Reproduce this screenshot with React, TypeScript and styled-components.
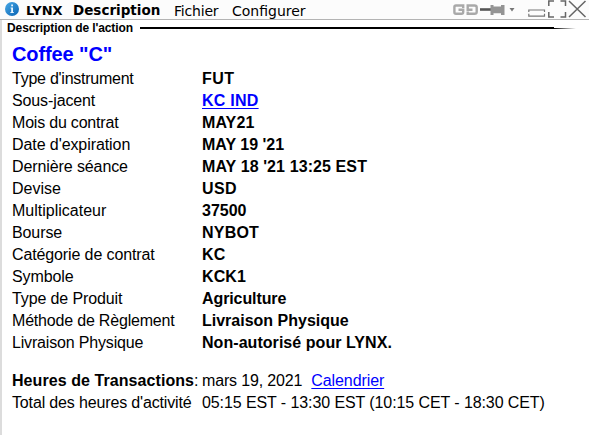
import React from 'react';
import styled, { createGlobalStyle } from 'styled-components';

const Global = createGlobalStyle`
  * { box-sizing: border-box; }
  body { margin: 0; background: #fff; overflow: hidden; }
`;

const Window = styled.main`
  width: 589px;
  height: 435px;
  display: flex;
  flex-direction: column;
  background: #fff;
  color: #000;
  font: 16px/22px "Liberation Sans", Arial, sans-serif;
  white-space: nowrap;
`;

const TitleBar = styled.header`
  height: 20px;
  flex: none;
  display: flex;
  align-items: flex-start;
  padding-left: 4px;
  background: #fcfcfc;
  border-bottom: 1px solid #b4b4b4;
  svg { display: block; flex: none; }
`;

const BarText = styled.span<{ $width: number; $size: number; $bold?: boolean; $gap?: number; $track?: number }>`
  width: ${p => p.$width}px;
  margin-left: ${p => p.$gap ?? 0}px;
  font: ${p => (p.$bold ? 700 : 400)} ${p => p.$size}px/${p => (p.$bold ? 21 : 23)}px "DejaVu Sans", Verdana, sans-serif;
  letter-spacing: ${p => p.$track ?? 0}px;
`;

const Controls = styled.div`
  margin-left: auto;
`;

const Body = styled.section`
  flex: 1;
  border-left: 2px solid #dcdcdc;
`;

const SectionHead = styled.div`
  height: 16px;
  display: flex;
  align-items: center;
  padding-left: 5px;
`;

const SectionTitle = styled.h2`
  width: 133px;
  margin: 0;
  font-size: 12px;
  line-height: 16px;
  font-weight: 700;
  letter-spacing: -0.1px;
`;

const Rule = styled.div`
  width: 414px;
  height: 2px;
  background: #000;
`;

const RuleTail = styled.div`
  width: 22px;
  height: 1px;
  margin-top: 1px;
  background: linear-gradient(90deg, #000, #fff);
`;

const Product = styled.h1`
  margin: 6px 0 0 10px;
  height: 26px;
  font-size: 20px;
  line-height: 25px;
  letter-spacing: -0.1px;
  color: #00f;
`;

const Grid = styled.dl`
  margin: 0 0 0 10px;
  display: grid;
  grid-template-columns: 190px 1fr;
  grid-auto-rows: 22px;
`;

const Label = styled.dt<{ $track?: number }>`
  letter-spacing: ${p => p.$track ?? 0}px;
`;

const Value = styled.dd<{ $bold?: boolean; $track?: number }>`
  margin: 0;
  font-weight: ${p => (p.$bold ? 700 : 400)};
  letter-spacing: ${p => p.$track ?? 0}px;
`;

const Hours = styled(Grid)`
  margin-top: 16px;
`;

const Link = styled.a`
  color: #00f;
  text-decoration: underline;
  text-underline-offset: 2px;
  text-decoration-thickness: 1px;
`;

const CalendarLink = styled(Link)`
  margin-left: 9px;
  letter-spacing: -0.1px;
`;

const rows: { label: string; value: string; link?: boolean; lt?: number; vt?: number }[] = [
  { label: "Type d'instrument", value: 'FUT', lt: -0.25, vt: 0.5 },
  { label: 'Sous-jacent', value: 'KC IND', link: true, lt: -0.12, vt: 0.25 },
  { label: 'Mois du contrat', value: 'MAY21', lt: -0.2, vt: 0.1 },
  { label: "Date d'expiration", value: "MAY 19 '21", lt: -0.08 },
  { label: 'Dernière séance', value: "MAY 18 '21 13:25 EST", lt: -0.1, vt: 0.1 },
  { label: 'Devise', value: 'USD', vt: 0.4 },
  { label: 'Multiplicateur', value: '37500' },
  { label: 'Bourse', value: 'NYBOT', lt: -0.1, vt: 0.2 },
  { label: 'Catégorie de contrat', value: 'KC', lt: -0.12, vt: 0.2 },
  { label: 'Symbole', value: 'KCK1', lt: -0.1, vt: 0.1 },
  { label: 'Type de Produit', value: 'Agriculture', lt: -0.12, vt: -0.1 },
  { label: 'Méthode de Règlement', value: 'Livraison Physique', lt: -0.19 },
  { label: 'Livraison Physique', value: 'Non-autorisé pour LYNX.', lt: -0.17, vt: 0.05 },
];

const InfoIcon = () => (
  <svg width="16" height="18" viewBox="0 0 16 18">
    <defs>
      <linearGradient id="info" x1="0" y1="0" x2="1" y2="1">
        <stop offset="0" stopColor="#49a9e6" />
        <stop offset="1" stopColor="#0863b4" />
      </linearGradient>
    </defs>
    <circle cx="8" cy="9" r="7" fill="url(#info)" />
    <rect x="7.2" y="4.5" width="1.8" height="1.8" fill="#e8f5ff" />
    <path d="M6.6 7.5H9V12h.8v1H6.4V12H7.2V8.5h-.6z" fill="#e8f5ff" />
  </svg>
);

const WindowIcons = () => (
  <svg width="136" height="19" viewBox="453 0 136 19" fill="none">
    <g stroke="#a9a9a9" strokeWidth="2.4">
      <path d="M463.2 8V5.5H456Q454.4 5.5 454.4 7V12.3Q454.4 13.8 456 13.8H461.5Q463.2 13.8 463.2 12V9.7H458.5" />
      <path d="M467.7 11.5V13.8H474.5Q476.7 13.8 476.7 12V7.3Q476.7 5.5 474.5 5.5H467.7V9.7H472.5" />
    </g>
    <path d="M480 9.5H491" stroke="#555" strokeWidth="2.6" />
    <path d="M490.5 5H493.5V6.5H501V5H504.5V15H501V13.2H493.5V15H490.5Z" fill="#949494" />
    <path d="M509.5 8H514.5L512 11.5Z" fill="#777" />
    <path d="M528.8 12V10H544.5V12M528.8 13.8V16.2H544.5V13.8" stroke="#777" strokeWidth="1.2" />
    <path d="M548.8 6V1H554M560.5 1H565.5V6M565.5 12V17H560.5M554 17H548.8V12" stroke="#666" strokeWidth="1.5" />
    <path d="M569 1L585.5 17M585.5 1L569 17" stroke="#666" strokeWidth="1.5" />
  </svg>
);

export default function App() {
  return (
    <>
      <Global />
      <Window>
        <TitleBar>
          <InfoIcon />
          <BarText $bold $gap={6} $width={47} $size={13}>LYNX</BarText>
          <BarText $bold $width={101} $size={13.5}>Description</BarText>
          <BarText $width={58} $size={14} $track={-0.2}>Fichier</BarText>
          <BarText $width={90} $size={14}>Configurer</BarText>
          <Controls><WindowIcons /></Controls>
        </TitleBar>
        <Body>
          <SectionHead>
            <SectionTitle>Description de l'action</SectionTitle>
            <Rule />
            <RuleTail />
          </SectionHead>
          <Product>Coffee "C"</Product>
          <Grid>
            {rows.map(r => (
              <React.Fragment key={r.label}>
                <Label $track={r.lt}>{r.label}</Label>
                <Value $bold $track={r.vt}>{r.link ? <Link>{r.value}</Link> : r.value}</Value>
              </React.Fragment>
            ))}
          </Grid>
          <Hours>
            <Label $track={0.07}><b>Heures de Transactions</b>:</Label>
            <Value $track={-0.15}>mars 19, 2021<CalendarLink>Calendrier</CalendarLink></Value>
            <Label $track={-0.15}>Total des heures d'activité</Label>
            <Value $track={-0.09}>05:15 EST - 13:30 EST (10:15 CET - 18:30 CET)</Value>
          </Hours>
        </Body>
      </Window>
    </>
  );
}
